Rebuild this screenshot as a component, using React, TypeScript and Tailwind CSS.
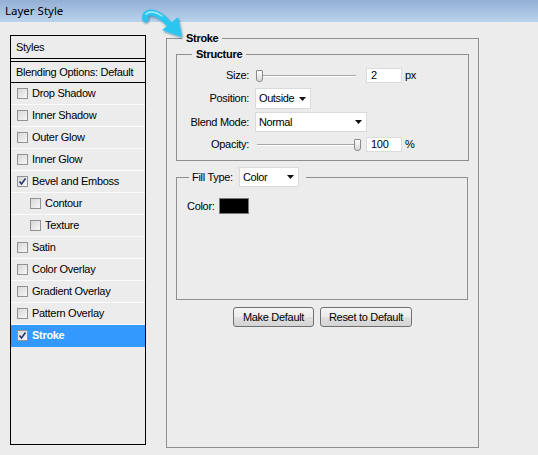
import React from 'react';

const font = { fontFamily: '"Liberation Sans", Arial, sans-serif' };

const effects: { label: string; checked?: boolean; indent?: boolean; active?: boolean }[] = [
  { label: 'Drop Shadow' },
  { label: 'Inner Shadow' },
  { label: 'Outer Glow' },
  { label: 'Inner Glow' },
  { label: 'Bevel and Emboss', checked: true },
  { label: 'Contour', indent: true },
  { label: 'Texture', indent: true },
  { label: 'Satin' },
  { label: 'Color Overlay' },
  { label: 'Gradient Overlay' },
  { label: 'Pattern Overlay' },
  { label: 'Stroke', checked: true, active: true },
];

function CheckBox({ checked }: { checked?: boolean }) {
  return (
    <span className="relative inline-block w-[11px] h-[11px] shrink-0 border border-[#929292] bg-gradient-to-br from-[#d8d8d8] to-[#f7f7f7]">
      {checked ? (
        <svg width="9" height="9" viewBox="0 0 9 9" className="absolute left-0 top-0">
          <path d="M1.5 4.5 L3.5 7 L7.5 1.5" stroke="#27356e" strokeWidth="1.6" fill="none" />
        </svg>
      ) : null}
    </span>
  );
}

function Caret() {
  return (
    <svg width="7" height="4" viewBox="0 0 7 4" className="shrink-0">
      <path d="M0 0 H7 L3.5 4 Z" fill="#111" />
    </svg>
  );
}

function Dropdown({ value, width, height }: { value: string; width: string; height: string }) {
  return (
    <div className={`flex items-center justify-between bg-white border border-[#dadada] pl-[3px] pr-[4px] ${width} ${height}`}>
      <span className="text-[11px] tracking-[-0.4px]">{value}</span>
      <Caret />
    </div>
  );
}

function Slider({ width, thumbAt }: { width: string; thumbAt: 'start' | 'end' }) {
  return (
    <div className={`relative h-[14px] ${width}`}>
      <div className="absolute left-[2px] right-0 top-[6px] h-[2px] border-t border-[#a8a8a8] border-b border-b-white" />
      <div
        className={`absolute top-[1px] w-[7px] h-[12px] rounded-b-[3px] rounded-t-[1px] border border-[#8a8a8a] bg-gradient-to-b from-white to-[#d6d6d6] ${
          thumbAt === 'start' ? 'left-[1px]' : 'right-0'
        }`}
      />
    </div>
  );
}

function NumInput({ value }: { value: string }) {
  return (
    <div className="w-[36px] h-[15px] bg-white border border-[#dcdcdc] pl-[4px] flex items-center text-[11px]">
      {value}
    </div>
  );
}

function Button({ label, width }: { label: string; width: string }) {
  return (
    <div
      className={`h-[20px] ${width} flex items-center justify-center rounded-[3px] border border-[#707070] bg-[linear-gradient(#f4f4f4_0%,#ececec_50%,#e0e0e0_51%,#d4d4d4_100%)] text-[11px]`}
    >
      {label}
    </div>
  );
}

export default function App() {
  return (
    <div
      className="relative w-[538px] h-[455px] bg-[#ececec] text-black overflow-hidden tracking-[-0.3px]"
      style={font}
    >
      <div
        className="h-[22px] bg-gradient-to-b from-[#92afd4] to-[#bad3ec] pl-[5px] flex items-center text-[11.5px] tracking-normal"
        style={{ fontFamily: '"Noto Sans", "Open Sans", sans-serif' }}
      >
        Layer Style
      </div>

      <div className="flex pl-[10px] pt-[13px] gap-[20px]">
        {/* styles list */}
        <div className="w-[136px] h-[410px] border border-black flex flex-col text-[11px]">
          <div className="h-[23px] border-b border-black pl-[5px] flex items-center">Styles</div>
          <div className="h-[22px] mt-[2px] border-t border-b border-black pl-[5px] flex items-center">
            Blending Options: Default
          </div>
          {effects.map((e) => (
            <div
              key={e.label}
              className={`h-[22px] border-b flex items-center gap-[4px] ${e.indent ? 'pl-[19px]' : 'pl-[6px]'} ${
                e.active ? 'bg-[#3399ff] text-white font-bold border-[#3399ff]' : 'border-[#fbfbfb]'
              }`}
            >
              <CheckBox checked={e.checked} />
              <span>{e.label}</span>
            </div>
          ))}
        </div>

        {/* stroke panel */}
        <fieldset className="w-[313px] h-[417px] -mt-[4px] border border-[#8e8e8e] px-[9px] text-[11px]">
          <legend className="ml-[6px] px-[4px] font-bold leading-[14px]">Stroke</legend>

          <fieldset className="mt-[2px] border border-[#8e8e8e] pb-[8px]">
            <legend className="ml-[15px] px-[4px] font-bold leading-[14px]">Structure</legend>

            <div className="mt-[7px] flex items-center h-[15px]">
              <span className="w-[72px] text-right">Size:</span>
              <div className="ml-[6px]">
                <Slider width="w-[101px]" thumbAt="start" />
              </div>
              <div className="ml-[10px]">
                <NumInput value="2" />
              </div>
              <span className="ml-[3px]">px</span>
            </div>

            <div className="mt-[5px] flex items-center">
              <span className="w-[72px] text-right">Position:</span>
              <div className="ml-[6px]">
                <Dropdown value="Outside" width="w-[56px]" height="h-[21px]" />
              </div>
            </div>

            <div className="mt-[3px] flex items-center">
              <span className="w-[72px] text-right">Blend Mode:</span>
              <div className="ml-[6px]">
                <Dropdown value="Normal" width="w-[112px]" height="h-[20px]" />
              </div>
            </div>

            <div className="mt-[5px] flex items-center h-[15px]">
              <span className="w-[72px] text-right">Opacity:</span>
              <div className="ml-[6px]">
                <Slider width="w-[106px]" thumbAt="end" />
              </div>
              <div className="ml-[5px]">
                <NumInput value="100" />
              </div>
              <span className="ml-[3px]">%</span>
            </div>
          </fieldset>

          <fieldset className="mt-[6px] h-[133px] w-[292px] border border-[#8e8e8e]">
            <legend className="ml-[12px] pl-[3px] pr-[7px] flex items-center">
              <span className="w-[47px]">Fill Type:</span>
              <Dropdown value="Color" width="w-[60px]" height="h-[20px]" />
            </legend>
            <div className="mt-[11px] pl-[10px] flex items-center">
              <span className="w-[32px]">Color:</span>
              <div className="w-[30px] h-[16px] bg-black border border-[#7a7a7a]" />
            </div>
          </fieldset>

          <div className="mt-[7px] flex justify-center gap-[6px]">
            <Button label="Make Default" width="w-[81px]" />
            <Button label="Reset to Default" width="w-[92px]" />
          </div>
        </fieldset>
      </div>

      {/* pointer arrow annotation */}
      <svg className="absolute left-0 top-0 pointer-events-none" width="538" height="60" viewBox="0 0 538 60">
        <defs>
          <filter id="glow" x="-50%" y="-50%" width="200%" height="200%">
            <feDropShadow dx="1" dy="1.5" stdDeviation="1.2" floodColor="#0b5f86" floodOpacity="0.6" />
          </filter>
        </defs>
        <g filter="url(#glow)">
          <path d="M145 19 C144 10 156 9 169 24" stroke="#2cc6f0" strokeWidth="6" strokeLinecap="round" fill="none" />
          <polygon points="162,30 178,17 182,37" fill="#2cc6f0" />
          <path d="M146 14 C149 11 155 11 162 16" stroke="#a6ecff" strokeWidth="1.5" strokeLinecap="round" fill="none" />
        </g>
      </svg>
    </div>
  );
}
